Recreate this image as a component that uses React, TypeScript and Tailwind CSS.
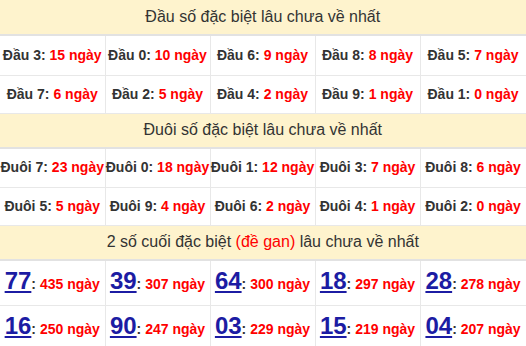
import React from "react";

type Pair = [string, string];

const dau: Pair[][] = [
  [["Đầu 3:", "15 ngày"], ["Đầu 0:", "10 ngày"], ["Đầu 6:", "9 ngày"], ["Đầu 8:", "8 ngày"], ["Đầu 5:", "7 ngày"]],
  [["Đầu 7:", "6 ngày"], ["Đầu 2:", "5 ngày"], ["Đầu 4:", "2 ngày"], ["Đầu 9:", "1 ngày"], ["Đầu 1:", "0 ngày"]],
];

const duoi: Pair[][] = [
  [["Đuôi 7:", "23 ngày"], ["Đuôi 0:", "18 ngày"], ["Đuôi 1:", "12 ngày"], ["Đuôi 3:", "7 ngày"], ["Đuôi 8:", "6 ngày"]],
  [["Đuôi 5:", "5 ngày"], ["Đuôi 9:", "4 ngày"], ["Đuôi 6:", "2 ngày"], ["Đuôi 4:", "1 ngày"], ["Đuôi 2:", "0 ngày"]],
];

const gan: Pair[][] = [
  [["77", "435 ngày"], ["39", "307 ngày"], ["64", "300 ngày"], ["18", "297 ngày"], ["28", "278 ngày"]],
  [["16", "250 ngày"], ["90", "247 ngày"], ["03", "229 ngày"], ["15", "219 ngày"], ["04", "207 ngày"]],
];

const Header: React.FC<{ children: React.ReactNode }> = ({ children }) => (
  <tr>
    <th
      colSpan={5}
      className="h-[35px] bg-[#fef3cd] border-b-2 border-[#e2e2e2] border-r border-r-[#e6e6e6] text-center font-normal text-[16px] text-[#333] p-0"
    >
      {children}
    </th>
  </tr>
);

const cell = "border-r border-b border-[#e8e8e8] text-center p-0 whitespace-nowrap overflow-visible";

const App: React.FC = () => {
  return (
    <div
      className="w-[526px] h-[346px] overflow-hidden bg-white"
      style={{ fontFamily: '"Liberation Sans", Arial, sans-serif' }}
    >
      <table className="w-[526px] table-fixed border-collapse">
        <colgroup>
          <col className="w-[105px]" />
          <col className="w-[105px]" />
          <col className="w-[105px]" />
          <col className="w-[105px]" />
          <col className="w-[106px]" />
        </colgroup>
        <tbody>
          <Header>Đầu số đặc biệt lâu chưa về nhất</Header>
          {dau.map((row, i) => (
            <tr key={"d" + i} className={i === 0 ? "h-[40px]" : "h-[38px]"}>
              {row.map(([a, b]) => (
                <td key={a} className={cell + " text-[14px] font-bold"}>
                  <span className="text-[#333]">{a}</span>{" "}
                  <span className="text-[#ff0000]">{b}</span>
                </td>
              ))}
            </tr>
          ))}
          <Header>Đuôi số đặc biệt lâu chưa về nhất</Header>
          {duoi.map((row, i) => (
            <tr key={"u" + i} className={i === 0 ? "h-[39px]" : "h-[38px]"}>
              {row.map(([a, b]) => (
                <td key={a} className={cell + " text-[14px] font-bold"}>
                  <span className="text-[#333]">{a}</span>{" "}
                  <span className="text-[#ff0000]">{b}</span>
                </td>
              ))}
            </tr>
          ))}
          <Header>
            2 số cuối đặc biệt <span className="text-[#ff0000]">(đề gan)</span> lâu chưa về nhất
          </Header>
          {gan.map((row, i) => (
            <tr key={"g" + i} className={i === 0 ? "h-[45px]" : "h-[44px]"}>
              {row.map(([a, b]) => (
                <td key={a} className={cell + " font-bold"}>
                  <span className="text-[24px] text-[#1c1ca3] underline underline-offset-2 decoration-2 leading-none">
                    {a}
                  </span>
                  <span className="text-[#333] text-[14px]">: </span>
                  <span className="text-[#ff0000] text-[14px]">{b}</span>
                </td>
              ))}
            </tr>
          ))}
        </tbody>
      </table>
    </div>
  );
};

export default App;
